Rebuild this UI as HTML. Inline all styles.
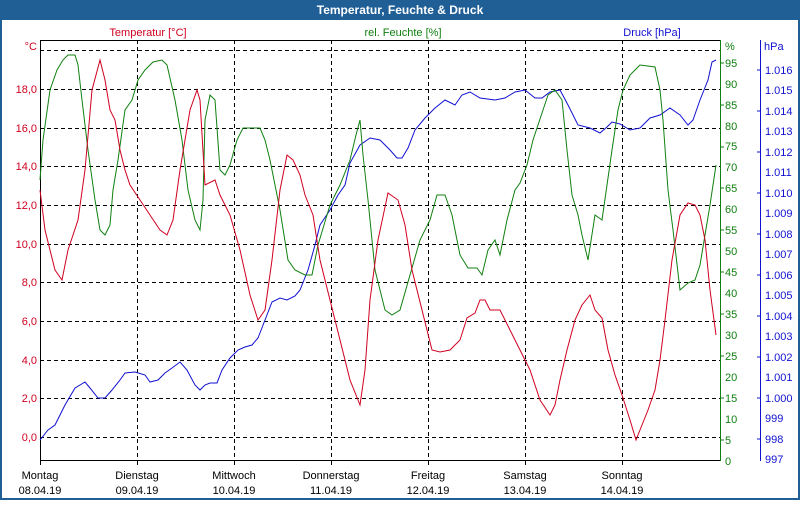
<!DOCTYPE html>
<html><head><meta charset="utf-8"><style>
body{margin:0;width:800px;height:500px;overflow:hidden;background:#fff;font-family:"Liberation Sans",sans-serif}
</style></head><body>
<svg width="800" height="500" xmlns="http://www.w3.org/2000/svg" font-family="Liberation Sans, sans-serif" font-size="11">
<rect x="0" y="0" width="800" height="500" fill="#1f5f96"/>
<rect x="2" y="20" width="796" height="478" fill="#fff"/>
<text x="400" y="14" fill="#fff" font-weight="bold" font-size="12" text-anchor="middle">Temperatur, Feuchte &amp; Druck</text>
<text x="148" y="36" fill="#d00020" text-anchor="middle">Temperatur [°C]</text>
<text x="403" y="36" fill="#108010" text-anchor="middle">rel. Feuchte [%]</text>
<text x="652" y="36" fill="#1010d0" text-anchor="middle">Druck [hPa]</text>
<g stroke="#000" stroke-dasharray="4,3" stroke-width="1">
<line x1="137.5" y1="40" x2="137.5" y2="460"/><line x1="234.5" y1="40" x2="234.5" y2="460"/><line x1="331.5" y1="40" x2="331.5" y2="460"/><line x1="428.5" y1="40" x2="428.5" y2="460"/><line x1="525.5" y1="40" x2="525.5" y2="460"/><line x1="622.5" y1="40" x2="622.5" y2="460"/>
<line x1="40" y1="50.5" x2="720" y2="50.5"/><line x1="40" y1="89.5" x2="720" y2="89.5"/><line x1="40" y1="128.5" x2="720" y2="128.5"/><line x1="40" y1="166.5" x2="720" y2="166.5"/><line x1="40" y1="205.5" x2="720" y2="205.5"/><line x1="40" y1="244.5" x2="720" y2="244.5"/><line x1="40" y1="282.5" x2="720" y2="282.5"/><line x1="40" y1="321.5" x2="720" y2="321.5"/><line x1="40" y1="360.5" x2="720" y2="360.5"/><line x1="40" y1="398.5" x2="720" y2="398.5"/><line x1="40" y1="437.5" x2="720" y2="437.5"/>
</g>
<line x1="40.5" y1="40" x2="40.5" y2="465" stroke="#000"/>
<line x1="40" y1="460.5" x2="720" y2="460.5" stroke="#000"/>
<line x1="40" y1="40.5" x2="720" y2="40.5" stroke="#000"/>
<g stroke="#000"><line x1="137.5" y1="460" x2="137.5" y2="465"/><line x1="234.5" y1="460" x2="234.5" y2="465"/><line x1="331.5" y1="460" x2="331.5" y2="465"/><line x1="428.5" y1="460" x2="428.5" y2="465"/><line x1="525.5" y1="460" x2="525.5" y2="465"/><line x1="622.5" y1="460" x2="622.5" y2="465"/></g>
<line x1="720.5" y1="40" x2="720.5" y2="461" stroke="#108010"/>
<line x1="760.5" y1="40" x2="760.5" y2="461" stroke="#1010d0"/>
<g fill="#d00020" text-anchor="end">
<text x="37" y="50">°C</text><text x="37" y="93">18,0</text><text x="37" y="132">16,0</text><text x="37" y="170">14,0</text><text x="37" y="209">12,0</text><text x="37" y="248">10,0</text><text x="37" y="286">8,0</text><text x="37" y="325">6,0</text><text x="37" y="364">4,0</text><text x="37" y="402">2,0</text><text x="37" y="441">0,0</text>
</g>
<g fill="#108010">
<text x="725" y="50">%</text><text x="725" y="67">95</text><text x="725" y="88">90</text><text x="725" y="109">85</text><text x="725" y="130">80</text><text x="725" y="150">75</text><text x="725" y="171">70</text><text x="725" y="192">65</text><text x="725" y="213">60</text><text x="725" y="234">55</text><text x="725" y="255">50</text><text x="725" y="276">45</text><text x="725" y="297">40</text><text x="725" y="318">35</text><text x="725" y="339">30</text><text x="725" y="360">25</text><text x="725" y="381">20</text><text x="725" y="402">15</text><text x="725" y="423">10</text><text x="725" y="444">5</text><text x="725" y="465">0</text>
</g>
<g stroke="#108010"><line x1="720" y1="63" x2="724" y2="63"/><line x1="720" y1="105" x2="724" y2="105"/><line x1="720" y1="147" x2="724" y2="147"/><line x1="720" y1="188" x2="724" y2="188"/><line x1="720" y1="230" x2="724" y2="230"/><line x1="720" y1="272" x2="724" y2="272"/><line x1="720" y1="314" x2="724" y2="314"/><line x1="720" y1="356" x2="724" y2="356"/><line x1="720" y1="398" x2="724" y2="398"/><line x1="720" y1="440" x2="724" y2="440"/></g>
<g fill="#1010d0">
<text x="764" y="50">hPa</text>
<text x="765" y="74">1.016</text><text x="765" y="94">1.015</text><text x="765" y="115">1.014</text><text x="765" y="135">1.013</text><text x="765" y="156">1.012</text><text x="765" y="176">1.011</text><text x="765" y="197">1.010</text><text x="765" y="217">1.009</text><text x="765" y="238">1.008</text><text x="765" y="258">1.007</text><text x="765" y="279">1.006</text><text x="765" y="299">1.005</text><text x="765" y="320">1.004</text><text x="765" y="340">1.003</text><text x="765" y="361">1.002</text><text x="765" y="381">1.001</text><text x="765" y="402">1.000</text><text x="765" y="422">999</text><text x="765" y="443">998</text><text x="765" y="463">997</text>
</g>
<g stroke="#1010d0"><line x1="757" y1="70" x2="760" y2="70"/><line x1="757" y1="111" x2="760" y2="111"/><line x1="757" y1="152" x2="760" y2="152"/><line x1="757" y1="193" x2="760" y2="193"/><line x1="757" y1="234" x2="760" y2="234"/><line x1="757" y1="275" x2="760" y2="275"/><line x1="757" y1="316" x2="760" y2="316"/><line x1="757" y1="357" x2="760" y2="357"/><line x1="757" y1="398" x2="760" y2="398"/><line x1="757" y1="439" x2="760" y2="439"/></g>
<g fill="#000" text-anchor="middle">
<text x="40" y="479">Montag</text><text x="40" y="494">08.04.19</text>
<text x="137" y="479">Dienstag</text><text x="137" y="494">09.04.19</text>
<text x="234" y="479">Mittwoch</text><text x="234" y="494">10.04.19</text>
<text x="331" y="479">Donnerstag</text><text x="331" y="494">11.04.19</text>
<text x="428" y="479">Freitag</text><text x="428" y="494">12.04.19</text>
<text x="525" y="479">Samstag</text><text x="525" y="494">13.04.19</text>
<text x="622" y="479">Sonntag</text><text x="622" y="494">14.04.19</text>
</g>
<g fill="none" stroke-width="1">
<polyline stroke="#1010d0" points="40,440 48,430 55,425 65,405 75,388 85,382 90,388 98,398 105,398 112,390 120,380 125,373 135,372 145,375 150,382 158,380 165,373 172,368 180,362 187,370 195,385 200,390 205,385 210,383 217,383 222,370 230,358 238,350 245,347 252,345 258,338 265,320 272,302 280,298 287,300 295,296 300,290 308,270 315,245 320,225 330,210 338,195 345,185 350,163 360,145 370,138 380,140 390,150 397,158 402,158 408,148 415,130 425,118 435,108 445,100 455,105 462,95 470,92 480,98 495,100 505,98 515,92 525,90 535,98 542,98 550,92 560,90 568,105 578,125 590,128 600,133 607,127 612,122 620,124 630,130 640,128 650,118 660,115 670,108 680,115 688,125 693,120 700,100 708,80 712,62 716,60"/>
<polyline stroke="#108010" points="40,180 43,140 50,90 57,70 63,60 68,55 75,55 78,65 82,100 88,150 95,200 100,230 105,235 110,225 113,190 118,160 125,110 132,100 138,80 145,70 153,62 162,60 167,65 175,100 182,140 188,190 195,220 200,230 203,200 205,120 210,95 215,100 220,170 225,175 230,165 237,140 243,128 260,128 265,140 270,160 280,210 288,260 295,270 305,275 312,275 318,245 330,205 340,185 350,160 356,135 360,120 363,155 368,200 375,270 385,310 392,315 400,310 410,275 420,240 430,220 437,195 445,195 452,215 460,255 468,268 477,268 482,275 488,250 495,240 500,255 507,220 515,190 520,183 527,165 533,140 538,125 543,110 548,95 555,90 562,100 567,150 572,195 578,215 582,235 588,260 595,215 602,220 607,185 612,150 618,110 623,90 630,75 640,65 655,67 660,90 663,120 668,190 673,230 680,290 688,283 695,280 700,265 710,205 716,165"/>
<polyline stroke="#d00020" points="40,190 45,230 55,270 62,280 68,250 78,220 85,170 92,90 100,60 105,80 110,110 115,120 120,150 125,170 130,185 140,200 150,215 160,230 167,235 173,220 180,170 190,110 197,90 200,100 205,185 215,180 220,195 230,215 240,250 250,295 258,320 265,310 272,260 280,190 287,155 293,160 300,175 305,195 313,215 320,260 330,300 340,340 350,380 360,405 365,370 370,300 378,240 388,193 398,200 405,225 412,270 422,310 432,350 440,352 450,350 460,340 467,318 475,313 480,300 485,300 490,310 500,310 505,320 510,330 520,350 530,370 540,400 550,415 555,405 560,380 567,350 575,320 582,305 590,295 595,310 602,318 608,350 615,375 622,395 630,420 636,440 642,425 648,410 655,390 660,360 665,320 672,260 680,215 688,203 695,205 700,215 705,240 710,290 716,335"/>
</g>
</svg>
</body></html>
